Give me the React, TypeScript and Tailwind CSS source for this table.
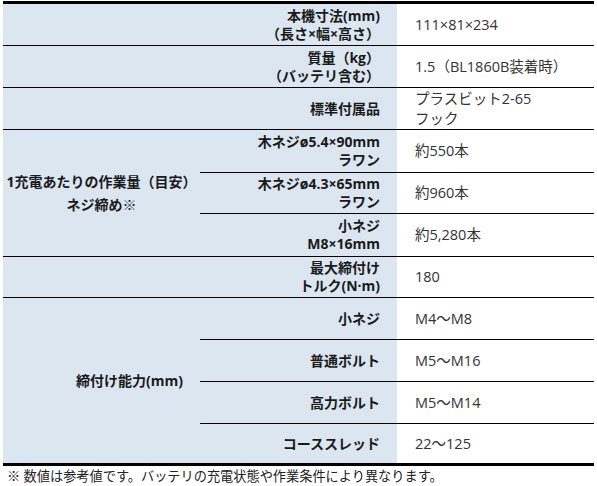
import React from "react";

const font = "[font-family:'Open_Sans','Noto_Sans_CJK_JP',sans-serif]";

function Label({ lines, className = "" }: { lines: string[]; className?: string }) {
  return (
    <div className={`bg-[#dce6f1] flex flex-col items-end justify-center pr-[17px] font-bold text-[14px] leading-[18px] text-[#1a1a1a] ${className}`}>
      {lines.map((l) => (
        <span key={l} className="whitespace-nowrap">{l}</span>
      ))}
    </div>
  );
}

function Value({ lines, className = "" }: { lines: string[]; className?: string }) {
  return (
    <div className={`flex flex-col justify-center pl-[18px] text-[14.5px] leading-[20px] text-[#333] ${className}`}>
      {lines.map((l) => (
        <span key={l} className="whitespace-nowrap">{l}</span>
      ))}
    </div>
  );
}

export default function App() {
  return (
    <div className={`w-[597px] h-[486px] bg-white ${font}`}>
      <div className="ml-[3px] mt-[1px] w-[591px] border-y-[3px] border-black grid grid-cols-[197px_197px_197px] grid-rows-[41px_42px_42px_43px_41px_43px_41px_42px_42px_42px_40px]">
        {/* 本機寸法 */}
        <Label className="col-span-2" lines={["本機寸法(mm)", "（長さ×幅×高さ）"]} />
        <Value lines={["111×81×234"]} />

        {/* 質量 */}
        <Label className="col-span-2 border-t border-black" lines={["質量（kg）", "（バッテリ含む）"]} />
        <Value className="border-t border-black" lines={["1.5（BL1860B装着時）"]} />

        {/* 標準付属品 */}
        <Label className="col-span-2 border-t border-black" lines={["標準付属品"]} />
        <Value className="border-t border-black" lines={["プラスビット2-65", "フック"]} />

        {/* 作業量 */}
        <div className="row-span-3 bg-[#dce6f1] border-t border-black flex flex-col items-center justify-center font-bold text-[14px] leading-[23px] text-[#1a1a1a] text-center">
          <span className="whitespace-nowrap">1充電あたりの作業量（目安）</span>
          <span>ネジ締め※</span>
        </div>
        <Label className="border-t border-black" lines={["木ネジø5.4×90mm", "ラワン"]} />
        <Value className="border-t border-black" lines={["約550本"]} />
        <Label className="border-t border-black" lines={["木ネジø4.3×65mm", "ラワン"]} />
        <Value className="border-t border-black" lines={["約960本"]} />
        <Label className="border-t border-black" lines={["小ネジ", "M8×16mm"]} />
        <Value className="border-t border-black" lines={["約5,280本"]} />

        {/* 最大締付けトルク */}
        <Label className="col-span-2 border-t border-black" lines={["最大締付け", "トルク(N·m)"]} />
        <Value className="border-t border-black" lines={["180"]} />

        {/* 締付け能力 */}
        <div className="row-span-4 bg-[#dce6f1] border-t border-black flex items-center justify-end pr-[17px] font-bold text-[14px] text-[#1a1a1a]">
          <span>締付け能力(mm)</span>
        </div>
        <Label className="border-t border-black" lines={["小ネジ"]} />
        <Value className="border-t border-black" lines={["M4〜M8"]} />
        <Label className="border-t border-black" lines={["普通ボルト"]} />
        <Value className="border-t border-black" lines={["M5〜M16"]} />
        <Label className="border-t border-black" lines={["高力ボルト"]} />
        <Value className="border-t border-black" lines={["M5〜M14"]} />
        <Label className="border-t border-black" lines={["コーススレッド"]} />
        <Value className="border-t border-black" lines={["22〜125"]} />
      </div>
      <p className="pl-[7px] text-[13.2px] leading-[20px] text-[#222] whitespace-nowrap">
        ※ 数値は参考値です。バッテリの充電状態や作業条件により異なります。
      </p>
    </div>
  );
}
